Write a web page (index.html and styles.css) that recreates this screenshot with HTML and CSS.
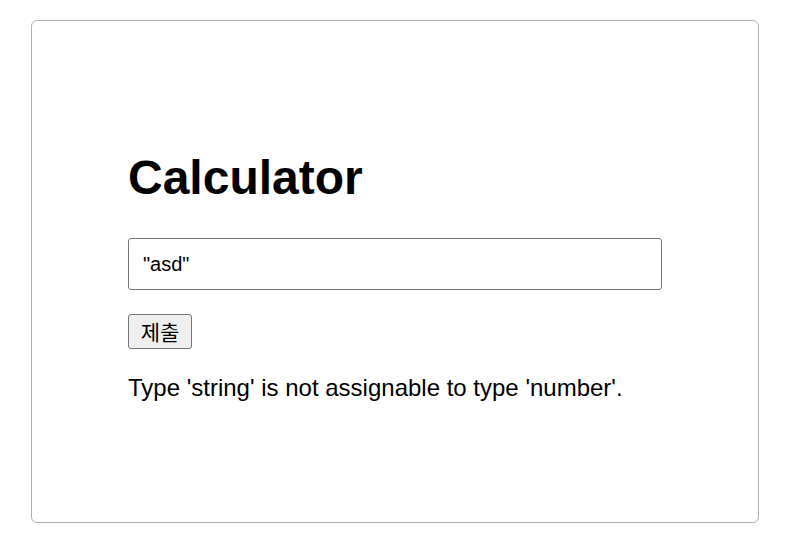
FILE: index.html
```html
<!DOCTYPE html>
<html lang="ko">
<head>
<meta charset="utf-8">
<title>Calculator</title>
<link rel="stylesheet" href="styles.css">
</head>
<body>
<main class="card">
  <h1 class="title">Calculator</h1>
  <input class="field" type="text" value="&quot;asd&quot;">
  <button class="submit" type="button">제출</button>
  <p class="error">Type 'string' is not assignable to type 'number'.</p>
</main>
</body>
</html>
```

FILE: styles.css
```css
html, body {
  margin: 0;
  padding: 0;
  background: #ffffff;
}

body {
  font-family: "Liberation Sans", Arial, sans-serif;
  color: #000;
}

.card {
  box-sizing: border-box;
  width: 728px;
  margin: 20px 0 0 31px;
  padding: 129px 96px 120px;
  border: 1px solid #b0b0b0;
  border-radius: 6px;
  display: flex;
  flex-direction: column;
  align-items: flex-start;
}

.title {
  margin: 0;
  font-size: 48px;
  line-height: 55px;
  font-weight: bold;
}

.field {
  box-sizing: border-box;
  margin: 33px 0 0;
  width: 534px;
  height: 52px;
  padding: 0 14px;
  border: 1px solid #767676;
  border-radius: 3px;
  font-family: "Liberation Sans", Arial, sans-serif;
  font-size: 20px;
  color: #000;
  background: #fff;
  outline: none;
}

.submit {
  box-sizing: border-box;
  margin: 24px 0 0;
  width: 64px;
  height: 35px;
  padding: 0;
  border: 1px solid #767676;
  border-radius: 3px;
  background: #efefef;
  font-family: "Noto Sans CJK KR", "Liberation Sans", sans-serif;
  font-size: 21px;
  line-height: 27px;
  color: #000;
  text-align: center;
}

.error {
  margin: 25px 0 0;
  font-size: 24px;
  line-height: 28px;
}
```
